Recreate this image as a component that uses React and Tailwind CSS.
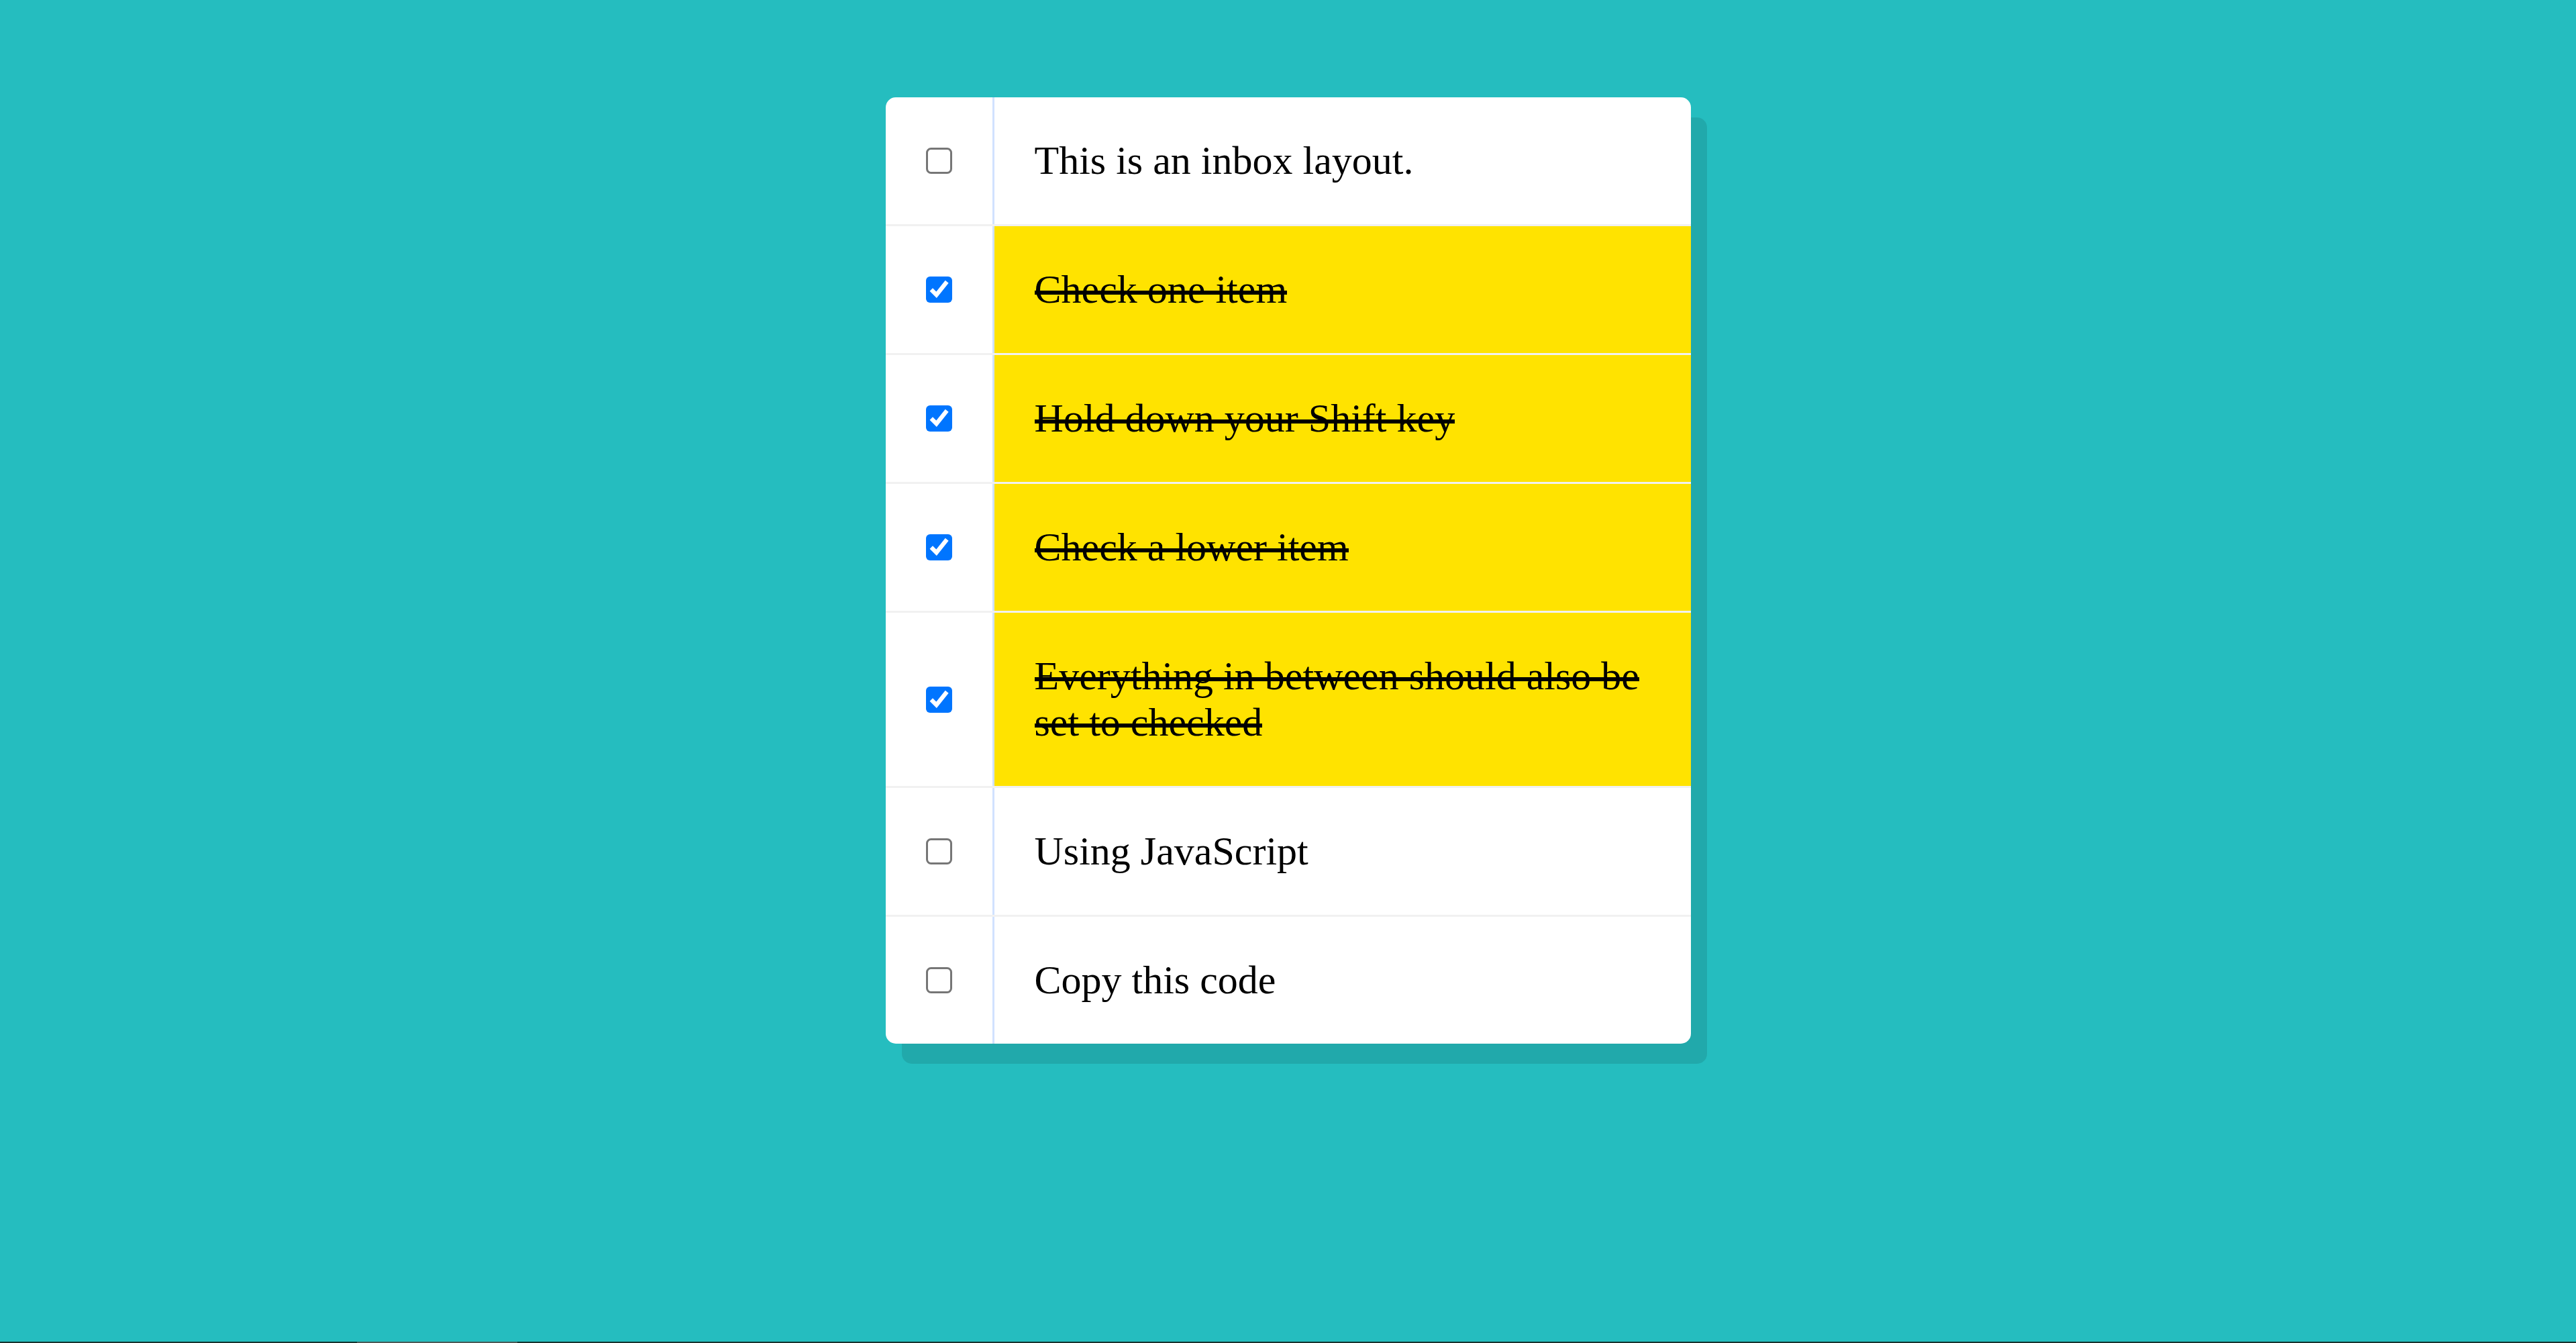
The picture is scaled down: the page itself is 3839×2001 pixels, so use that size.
import React from "react";

const items = [
  { text: "This is an inbox layout.", checked: false },
  { text: "Check one item", checked: true },
  { text: "Hold down your Shift key", checked: true },
  { text: "Check a lower item", checked: true },
  { text: "Everything in between should also be set to checked", checked: true },
  { text: "Using JavaScript", checked: false },
  { text: "Copy this code", checked: false },
];

export default function App() {
  return (
    <div className="min-h-[2001px] flex flex-col bg-[#25bdbf]">
      <main className="flex-1 pt-[145px]">
        <div className="w-[1200px] mx-auto bg-white rounded-[15px] overflow-hidden shadow-[24px_30px_0_rgba(0,0,0,0.1)]">
          {items.map((item, i) => (
            <div
              key={i}
              className={
                i === items.length - 1
                  ? "flex items-center"
                  : "flex items-center border-b-[3px] border-[#f1f1f1]"
              }
            >
              <input
                type="checkbox"
                defaultChecked={item.checked}
                className="m-5 [zoom:3] shrink-0"
              />
              <p
                className={
                  item.checked
                    ? "flex-1 m-0 p-[60px] border-l-[3px] border-[#d1e2ff] bg-[#ffe300] text-black text-[60px] leading-[69px] font-['Liberation_Serif',serif]"
                    : "flex-1 m-0 p-[60px] border-l-[3px] border-[#d1e2ff] text-black text-[60px] leading-[69px] font-['Liberation_Serif',serif]"
                }
              >
                {item.checked ? (
                  <span className="box-decoration-clone bg-[linear-gradient(to_bottom,transparent_35px,#000_35px,#000_41px,transparent_41px)]">
                    {item.text}
                  </span>
                ) : (
                  item.text
                )}
              </p>
            </div>
          ))}
        </div>
      </main>
      <div className="h-[2px] flex bg-[#17332e]">
        <div className="w-[532px]" />
        <div className="w-[239px] bg-[#4b5955]" />
      </div>
    </div>
  );
}
